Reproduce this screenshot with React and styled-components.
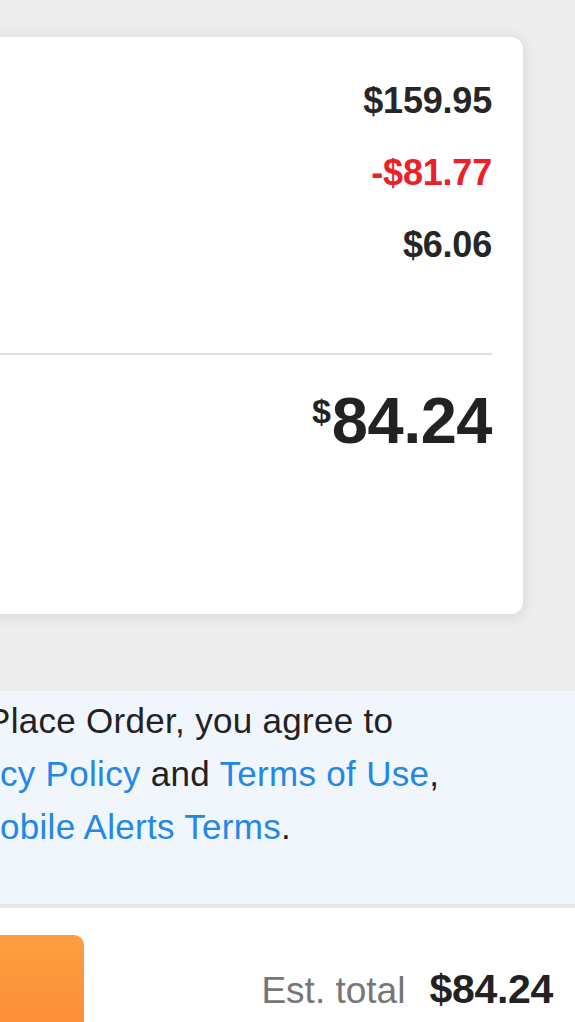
import React from 'react'
import styled, { createGlobalStyle } from 'styled-components'

const GlobalStyle = createGlobalStyle`
  html, body {
    margin: 0;
    padding: 0;
    background: #ededed;
    overflow: hidden;
    font-family: "Liberation Sans", Arial, Helvetica, sans-serif;
    color: #222;
  }
`

// the page is wider than the window; we see its right-hand part
const Page = styled.div`
  display: flex;
  flex-direction: column;
  width: calc(100% + 60px);
  margin-left: -60px;
  padding-top: 37px;
`

const SummaryCard = styled.section`
  margin-right: 52px;
  padding: 28px 31px 161px 60px;
  background: #fff;
  border-radius: 12px;
  box-shadow: 0 2px 16px rgba(0, 0, 0, 0.11);
`

const SummaryRow = styled.div`
  display: flex;
  justify-content: flex-end;
  align-items: center;
  height: 72px;
`

const Amount = styled.span`
  font-size: 36px;
  font-weight: 700;
  letter-spacing: -0.2px;
  color: ${p => (p.$tone === 'discount' ? '#ec2027' : '#262626')};
`

const Divider = styled.hr`
  margin: 72px 0 0;
  border: none;
  height: 2px;
  background: #e0e0e0;
`

const TotalRow = styled.div`
  display: flex;
  justify-content: flex-end;
  align-items: flex-start;
  margin-top: 33px;
  font-weight: 700;
  color: #222;
`

const Currency = styled.span`
  font-size: 34px;
  line-height: 34px;
  margin-top: 6px;
  margin-right: 1px;
`

const TotalValue = styled.span`
  font-size: 65px;
  line-height: 65px;
  letter-spacing: -0.5px;
`

const LegalPanel = styled.div`
  margin-top: 77px;
  padding: 3px 0 51px 60px;
  background: #f1f6fd;
  border-bottom: 4px solid #e6e6e6;
  overflow: hidden;
`

const LegalLine = styled.div`
  font-size: 35px;
  line-height: 53px;
  letter-spacing: 0.3px;
  white-space: nowrap;
  color: #222;
  margin-left: ${p => p.$indent || 0}px;
`

const LegalLink = styled.a`
  color: #2387e6;
  text-decoration: none;
`

const CheckoutBar = styled.div`
  display: flex;
  align-items: center;
  justify-content: space-between;
  padding: 27px 22px 0 0;
  background: #fff;
`

const PlaceOrderButton = styled.button`
  width: 144px;
  height: 108px;
  border: none;
  border-radius: 10px;
  background: linear-gradient(#fe9e41, #fb8b34);
`

const EstTotal = styled.div`
  display: flex;
  align-items: baseline;
  gap: 24px;
`

const EstLabel = styled.span`
  font-size: 37px;
  color: #767676;
`

const EstValue = styled.span`
  font-size: 41px;
  font-weight: 700;
  letter-spacing: -0.3px;
  color: #222;
`

const lines = [
  { amount: '$159.95' },
  { amount: '-$81.77', tone: 'discount' },
  { amount: '$6.06' }
]

export default function App() {
  return (
    <>
      <GlobalStyle />
      <Page>
        <SummaryCard>
          {lines.map(line => (
            <SummaryRow key={line.amount}>
              <Amount $tone={line.tone}>{line.amount}</Amount>
            </SummaryRow>
          ))}
          <Divider />
          <TotalRow>
            <Currency>$</Currency>
            <TotalValue>84.24</TotalValue>
          </TotalRow>
        </SummaryCard>

        <LegalPanel>
          <LegalLine $indent={-13}>Place Order, you agree to</LegalLine>
          <LegalLine>
            <LegalLink href="#">cy Policy</LegalLink> and <LegalLink href="#">Terms of Use</LegalLink>,
          </LegalLine>
          <LegalLine>
            <LegalLink href="#">obile Alerts Terms</LegalLink>.
          </LegalLine>
        </LegalPanel>

        <CheckoutBar>
          <PlaceOrderButton aria-label="Place Order" />
          <EstTotal>
            <EstLabel>Est. total</EstLabel>
            <EstValue>$84.24</EstValue>
          </EstTotal>
        </CheckoutBar>
      </Page>
    </>
  )
}
